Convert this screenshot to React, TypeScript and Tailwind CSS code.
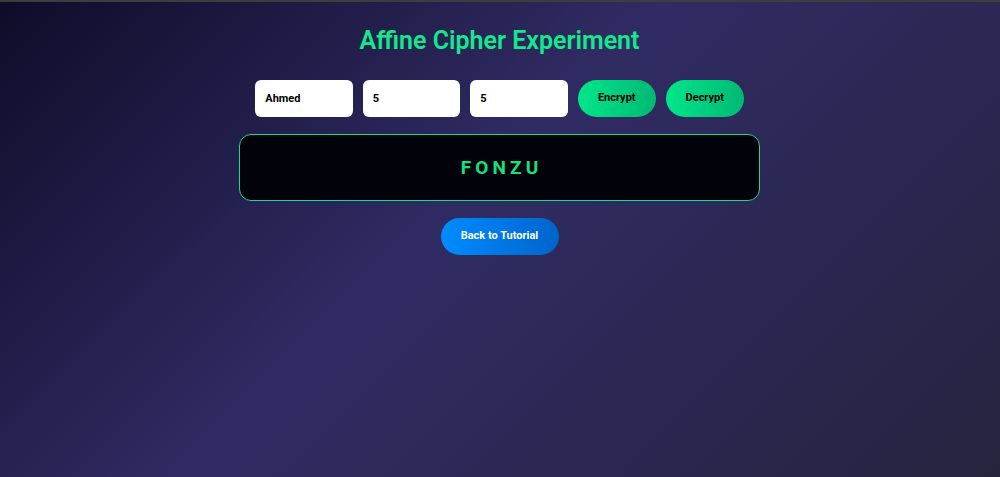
import { useState } from 'react';

function affine(text: string, a: number, b: number, decrypt: boolean) {
  let inv = 1;
  for (let i = 1; i < 26; i++) if ((a * i) % 26 === 1) inv = i;
  return text
    .toUpperCase()
    .replace(/[^A-Z]/g, '')
    .split('')
    .map((ch) => {
      const x = ch.charCodeAt(0) - 65;
      const y = decrypt ? (((inv * (x - b)) % 26) + 26) % 26 : (a * x + b) % 26;
      return String.fromCharCode(y + 65);
    })
    .join('');
}

export default function App() {
  const [text, setText] = useState('Ahmed');
  const [a, setA] = useState('5');
  const [b, setB] = useState('5');
  const [out, setOut] = useState('FONZU');

  const input = 'h-[37px] w-[97.5px] rounded-md bg-white px-[10px] text-[11px] font-bold text-black outline-none';
  const green = 'h-[37px] w-[78px] rounded-full bg-gradient-to-r from-[#00e68a] to-[#00b874] text-[11px] font-bold text-black';

  return (
    <div className="min-h-[477px] border-t-[2px] border-[#3d3d3d] bg-[linear-gradient(135deg,#0f0c29_0%,#302b63_45%,#24243e_100%)] font-['Roboto',sans-serif]">
      <div className="flex flex-col items-center pt-[24px] pr-[1px]">
        <h1 className="text-[25px] font-semibold leading-[30px] text-[#14e88c]">Affine Cipher Experiment</h1>
        <div className="mt-[24px] flex gap-[10px]">
          <input className={input} value={text} onChange={(e) => setText(e.target.value)} />
          <input className={input} value={a} onChange={(e) => setA(e.target.value)} />
          <input className={input} value={b} onChange={(e) => setB(e.target.value)} />
          <button className={green} onClick={() => setOut(affine(text, Number(a), Number(b), false))}>Encrypt</button>
          <button className={green} onClick={() => setOut(affine(text, Number(a), Number(b), true))}>Decrypt</button>
        </div>
        <div className="mt-[17px] flex h-[67px] w-[521px] items-center justify-center rounded-xl border border-[#1fd98f] bg-[#02020a]">
          <span className="pl-[0.22em] text-[19px] font-bold leading-none tracking-[0.22em] text-[#14e07e]">{out}</span>
        </div>
        <button className="mt-[17px] h-[37px] w-[118px] rounded-full bg-gradient-to-r from-[#008cff] to-[#0064cc] text-[11px] font-bold text-white">
          Back to Tutorial
        </button>
      </div>
    </div>
  );
}
